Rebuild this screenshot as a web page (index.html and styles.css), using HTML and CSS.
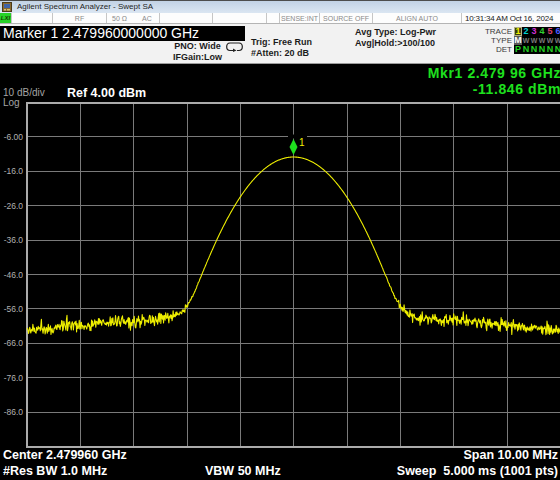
FILE: index.html
```html
<!DOCTYPE html>
<html lang="en">
<head>
    <meta charset="UTF-8">
    <title>Agilent Spectrum Analyzer - Swept SA</title>
    <link rel="stylesheet" href="styles.css">
</head>
<body>
    <div class="titlebar">
        <svg class="app-icon" viewBox="0 0 10 10">
            <rect x="0.5" y="0.5" width="9" height="9" fill="#8a6a32" stroke="#4a3a1a"/>
            <rect x="2" y="2" width="6" height="4" fill="#3f63a8"/>
            <rect x="2" y="7" width="2" height="1.5" fill="#d8c070"/>
            <rect x="5" y="7" width="3" height="1.5" fill="#d8c070"/>
        </svg>
        <span class="title">Agilent Spectrum Analyzer - Swept SA</span>
    </div>

    <div class="statusbar">
        <div class="cell lxi">LXI</div>
        <div class="cell"></div>
        <div class="cell">RF</div>
        <div class="cell input"><span>50 Ω</span><span>AC</span></div>
        <div class="cell"></div>
        <div class="cell"></div>
        <div class="cell"></div>
        <div class="cell">SENSE:INT</div>
        <div class="cell">SOURCE OFF</div>
        <div class="cell">ALIGN AUTO</div>
        <div class="cell time">10:31:34 AM Oct 16, 2024</div>
    </div>

    <div class="header">
        <div class="hdr-left">
            <div class="marker-box">Marker 1 2.479960000000 GHz</div>
            <div class="pno-row">
                <div class="pno">PNO: Wide<br>IFGain:Low</div>
                <svg class="trig-icon" viewBox="0 0 17 10">
                    <path d="M7 8.5 H4 A3.5 3.5 0 0 1 0.7 5 V4.5 A3.5 3.5 0 0 1 4 1 H13 A3.5 3.5 0 0 1 16.3 4.5 V5 A3.5 3.5 0 0 1 13 8.5 H11" fill="none" stroke="#222" stroke-width="1.2"/>
                    <path d="M7 6.5 L10.5 8.5 L7 10 Z" fill="#222"/>
                </svg>
            </div>
        </div>
        <div class="hdr-trig">Trig: Free Run<br>#Atten: 20 dB</div>
        <div class="hdr-avg">Avg Type: Log-Pwr<br>Avg|Hold:&gt;100/100</div>
        <div class="trace-labels">TRACE<br>TYPE<br>DET</div>
        <div class="trace-panel">
            <div class="trace-row">
                <span class="t-active">1</span><span class="t2">2</span><span class="t3">3</span><span class="t4">4</span><span class="t5">5</span><span class="t6">6</span>
            </div>
            <div class="trace-row type-row">
                <span class="t-type">M</span><span>W</span><span>W</span><span>W</span><span>W</span><span>W</span>
            </div>
            <div class="trace-row det-row">
                <span>P</span><span>N</span><span>N</span><span>N</span><span>N</span><span>N</span>
            </div>
        </div>
    </div>

    <div class="screen">
        <div class="info">
            <div class="scale-ref">
                <div class="scale">10 dB/div<br>Log</div>
                <div class="ref">Ref 4.00 dBm</div>
            </div>
            <div class="mkr-readout">Mkr1 2.479 96 GHz<br>-11.846 dBm</div>
        </div>

        <svg class="plot" width="560" height="351" viewBox="0 97 560 351">
            <g class="grid">
                <line x1="80.5" y1="103" x2="80.5" y2="447"/>
                <line x1="133.5" y1="103" x2="133.5" y2="447"/>
                <line x1="187.5" y1="103" x2="187.5" y2="447"/>
                <line x1="240.5" y1="103" x2="240.5" y2="447"/>
                <line x1="293.5" y1="103" x2="293.5" y2="447"/>
                <line x1="347.5" y1="103" x2="347.5" y2="447"/>
                <line x1="400.5" y1="103" x2="400.5" y2="447"/>
                <line x1="453.5" y1="103" x2="453.5" y2="447"/>
                <line x1="507.5" y1="103" x2="507.5" y2="447"/>
                <line x1="27" y1="136.5" x2="560" y2="136.5"/>
                <line x1="27" y1="171.5" x2="560" y2="171.5"/>
                <line x1="27" y1="205.5" x2="560" y2="205.5"/>
                <line x1="27" y1="240.5" x2="560" y2="240.5"/>
                <line x1="27" y1="274.5" x2="560" y2="274.5"/>
                <line x1="27" y1="308.5" x2="560" y2="308.5"/>
                <line x1="27" y1="343.5" x2="560" y2="343.5"/>
                <line x1="27" y1="377.5" x2="560" y2="377.5"/>
                <line x1="27" y1="412.5" x2="560" y2="412.5"/>
            </g>
            <path class="frame" d="M560 103 H27 V447 H560"/>

            <g class="axis">
                <text x="23" y="136.9">-6.00</text>
                <text x="23" y="171.3">-16.0</text>
                <text x="23" y="205.7">-26.0</text>
                <text x="23" y="240.1">-36.0</text>
                <text x="23" y="274.5">-46.0</text>
                <text x="23" y="308.9">-56.0</text>
                <text x="23" y="343.3">-66.0</text>
                <text x="23" y="377.7">-76.0</text>
                <text x="23" y="412.1">-86.0</text>
            </g>

            <rect x="288" y="134.5" width="19" height="4" fill="#000"/>
            <polyline id="trace" class="trace" points=""/>
            <polygon class="marker" points="293.5,139 297.5,147 293.5,155 289.5,147"/>
            <text class="marker-num" x="299" y="145.5">1</text>
        </svg>

        <div class="footer">
            <div class="footer-row">
                <span>Center 2.479960 GHz</span>
                <span></span>
                <span class="end">Span 10.00 MHz</span>
            </div>
            <div class="footer-row">
                <span>#Res BW 1.0 MHz</span>
                <span>VBW 50 MHz</span>
                <span class="end">Sweep&nbsp; 5.000 ms (1001 pts)</span>
            </div>
        </div>
    </div>

    <script>
        // gerador pseudo-aleatório com semente fixa, para o ruído ser sempre igual
        function mulberry32(a) {
            return function () {
                a |= 0; a = a + 0x6D2B79F5 | 0;
                let t = Math.imul(a ^ a >>> 15, 1 | a);
                t = t + Math.imul(t ^ t >>> 7, 61 | t) ^ t;
                return ((t ^ t >>> 14) >>> 0) / 4294967296;
            };
        }
        const rand = mulberry32(20241016);

        function gauss() {
            let u = 0;
            while (!u) u = rand();
            return Math.sqrt(-2 * Math.log(u)) * Math.cos(2 * Math.PI * rand());
        }

        // escala da tela: 10 dB/div, ref 4 dBm
        const X0 = 27, WIDTH = 533.33, TOP = 102.5, DIV = 34.4, REF = 4;
        const CENTER = 293.5;
        const points = [];

        for (let i = 0; i <= 1000; i++) {
            const x = X0 + WIDTH * i / 1000;
            const dx = x - CENTER;
            const signal = -11.846 - 0.0041 * dx * dx;
            const noise = -55.5 - 6.5 * Math.abs(dx) / 266 + 0.9 * gauss();
            const level = 10 * Math.log10(Math.pow(10, signal / 10) + Math.pow(10, noise / 10));
            const y = TOP + (REF - level) * DIV / 10;
            points.push(x.toFixed(2) + ',' + y.toFixed(2));
        }

        document.getElementById('trace').setAttribute('points', points.join(' '));
    </script>
</body>
</html>
```

FILE: styles.css
```css
* {
    box-sizing: border-box;
}

body {
    margin: 0;
    width: 560px;
    height: 480px;
    overflow: hidden;
    background: #000;
    font-family: "Liberation Sans", Arial, sans-serif;
}

.titlebar {
    height: 13px;
    display: flex;
    align-items: center;
    padding-left: 2px;
    background: linear-gradient(#c2d2e5, #dbe6f2);
    border-top: 1px solid #4d4d4d;
}

.app-icon {
    width: 10px;
    height: 10px;
}

.title {
    margin-left: 5px;
    font-size: 8px;
    line-height: 12px;
    color: #1e1e1e;
}

.statusbar {
    height: 11px;
    display: grid;
    grid-template-columns: 12px 41px 54px 53px 53px 54px 13px 40px 53px 89px 1fr;
    background: #fdfdfd;
    border-bottom: 1px solid #b4b4b4;
    font-size: 7px;
    color: #8a8a8a;
}

.cell {
    display: flex;
    align-items: center;
    justify-content: center;
    border-right: 1px solid #c6c6c6;
    white-space: nowrap;
    overflow: hidden;
}

.lxi {
    background: #28d228;
    color: #1a3a00;
    font-weight: bold;
    font-style: italic;
    font-size: 6px;
}

.input {
    justify-content: flex-start;
    gap: 15px;
    padding-left: 5px;
}

.time {
    justify-content: flex-start;
    padding-left: 3px;
    border-right: none;
    font-size: 8px;
    letter-spacing: -0.2px;
    color: #222;
}

.header {
    height: 40px;
    display: flex;
    background: #f2f2f2;
    border-bottom: 1px solid #9c9c9c;
    color: #1c1c1c;
    font-size: 9px;
    font-weight: bold;
    white-space: nowrap;
}

.hdr-left {
    width: 245px;
    flex: none;
}

.marker-box {
    margin-top: 2px;
    height: 15px;
    padding-left: 3px;
    background: #000;
    color: #fff;
    font-size: 14px;
    font-weight: normal;
    line-height: 15px;
}

.pno-row {
    display: flex;
    justify-content: flex-end;
}

.pno {
    text-align: center;
    line-height: 10.5px;
}

.trig-icon {
    width: 17px;
    height: 10px;
    margin: 1px 2px 0 4px;
}

.hdr-trig {
    width: 104px;
    flex: none;
    margin-left: 6px;
    padding-top: 12.5px;
    line-height: 11.5px;
}

.hdr-avg {
    flex: 1;
    padding-top: 2.5px;
    line-height: 11px;
}

.trace-labels {
    padding-top: 3px;
    font-size: 8px;
    font-weight: normal;
    line-height: 9px;
    color: #3a3a3a;
    text-align: right;
}

.trace-panel {
    width: 46px;
    height: 27px;
    margin: 3px 0 0 2px;
    background: #000;
    overflow: hidden;
}

.trace-row {
    display: flex;
    height: 9px;
    font-size: 9px;
    line-height: 9px;
}

.trace-row span {
    width: 8px;
    flex: none;
    text-align: center;
}

.t-active {
    color: #f0f000;
    background: #3a3a10;
    outline: 1px solid #b0b080;
    outline-offset: -1px;
}

.t2 { color: #00d0d0; }
.t3 { color: #d030d0; }
.t4 { color: #30d030; }
.t5 { color: #e04070; }
.t6 { color: #4a5cff; }

.type-row span {
    color: #7a7a7a;
    font-size: 7px;
}

.type-row .t-type {
    color: #fff;
    background: #5a5a5a;
    font-size: 9px;
}

.det-row span {
    color: #22d022;
}

.screen {
    height: 416px;
    background: #000;
    color: #fff;
}

.info {
    height: 33px;
    display: flex;
    justify-content: space-between;
    align-items: flex-start;
}

.scale-ref {
    display: flex;
    padding: 24px 0 0 3px;
}

.scale {
    width: 64px;
    font-size: 10px;
    line-height: 9.5px;
    color: #a4a4a4;
}

.ref {
    margin-top: 0.5px;
    font-size: 12.5px;
    font-weight: bold;
    line-height: 9px;
}

.mkr-readout {
    padding-top: 0.5px;
    margin-right: -1px;
    text-align: right;
    font-size: 14px;
    font-weight: bold;
    letter-spacing: 0.6px;
    line-height: 16px;
    color: #1ee01e;
}

.plot {
    display: block;
}

.grid line {
    stroke: #7a7a7a;
    stroke-width: 1;
}

.frame {
    fill: none;
    stroke: #ababab;
    stroke-width: 2;
}

.axis text {
    font-family: "Liberation Sans", Arial, sans-serif;
    font-size: 8.5px;
    fill: #b0b0b0;
    text-anchor: end;
    dominant-baseline: central;
}

.trace {
    fill: none;
    stroke: #eeee00;
    stroke-width: 1.1;
    stroke-linejoin: round;
}

.marker {
    fill: #1ee01e;
}

.marker-num {
    font-family: "Liberation Sans", Arial, sans-serif;
    font-size: 10px;
    fill: #f0f000;
}

.footer {
    padding: 0 2px 0 3px;
    font-size: 12.5px;
    font-weight: bold;
    line-height: 15.5px;
    white-space: nowrap;
}

.footer-row {
    display: grid;
    grid-template-columns: 202px auto 1fr;
}

.footer-row .end {
    justify-self: end;
}
```
